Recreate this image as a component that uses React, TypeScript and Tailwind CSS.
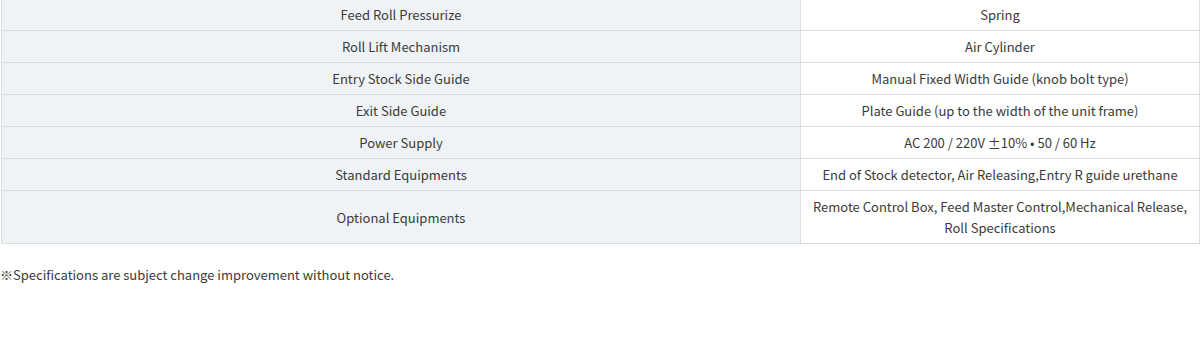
const rows: [string, string[]][] = [
  ['Feed Roll Pressurize', ['Spring']],
  ['Roll Lift Mechanism', ['Air Cylinder']],
  ['Entry Stock Side Guide', ['Manual Fixed Width Guide (knob bolt type)']],
  ['Exit Side Guide', ['Plate Guide (up to the width of the unit frame)']],
  ['Power Supply', ['AC 200 / 220V ±10% • 50 / 60 Hz']],
  ['Standard Equipments', ['End of Stock detector, Air Releasing,Entry R guide urethane']],
  ['Optional Equipments', ['Remote Control Box, Feed Master Control,Mechanical Release,', 'Roll Specifications']],
];

export default function App() {
  return (
    <div className="h-[342px] w-full overflow-hidden bg-white text-[13px] leading-[21px] text-[#3a3a3a] [font-family:'Noto_Sans_CJK_JP','Noto_Sans',sans-serif]">
      <div className="-mt-[2px] ml-px w-[1199px] border-x border-t border-[#d7dfe3]">
        {rows.map(([label, value]) => (
          <div key={label} className="grid grid-cols-[799px_1fr] border-b border-[#d7dfe3]">
            <div className="flex items-center justify-center border-r border-[#d7dfe3] bg-[#eff3f6] py-[5px] text-center">
              {label}
            </div>
            <div className="py-[5px] text-center">
              {value.map((line) => (
                <p key={line}>{line}</p>
              ))}
            </div>
          </div>
        ))}
      </div>
      <p className="mt-[20px]">※Specifications are subject change improvement without notice.</p>
    </div>
  );
}
